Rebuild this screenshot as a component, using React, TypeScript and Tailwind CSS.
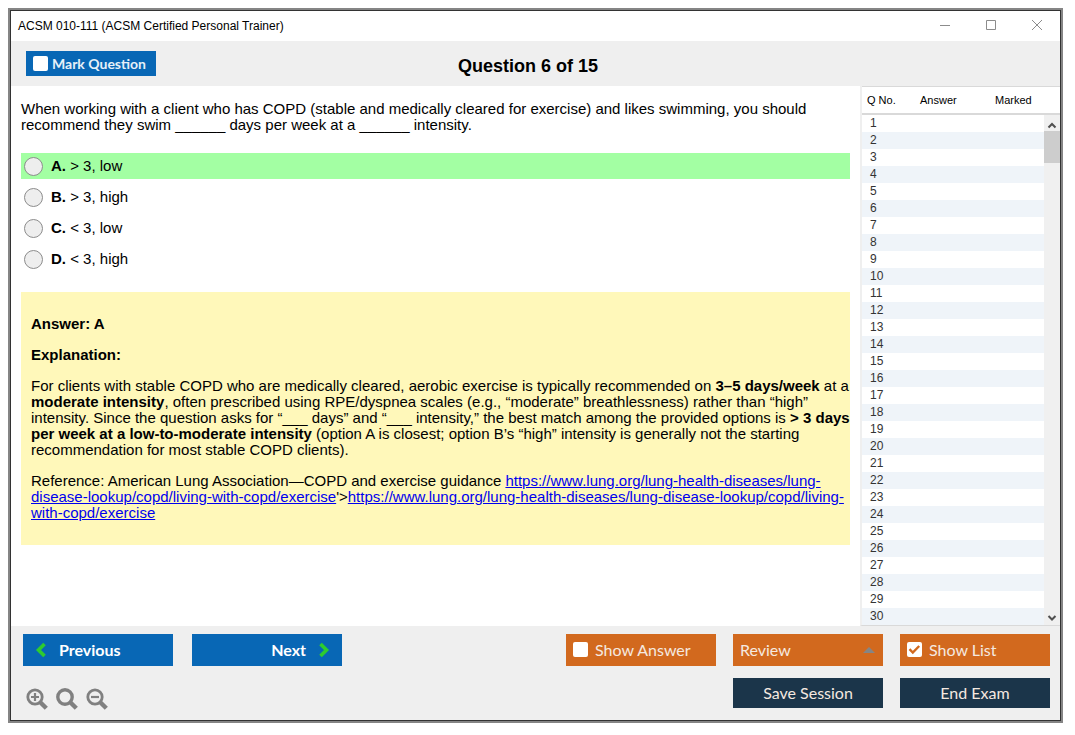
import { useState } from "react";
import type { ReactNode } from "react";

const OPTIONS = [
  { key: "A", text: "> 3, low" },
  { key: "B", text: "> 3, high" },
  { key: "C", text: "< 3, low" },
  { key: "D", text: "< 3, high" },
];

const CORRECT = "A";
const QUESTIONS = Array.from({ length: 30 }, (_, i) => i + 1);
const LUNG_URL =
  "https://www.lung.org/lung-health-diseases/lung-disease-lookup/copd/living-with-copd/exercise";

function TitleBar() {
  return (
    <div className="flex h-[30px] items-center justify-between bg-white pl-[7px] pr-[17px]">
      <span className="text-xs text-black">
        ACSM 010-111 (ACSM Certified Personal Trainer)
      </span>
      <div className="flex items-center gap-[34px]">
        <button type="button" aria-label="Minimize">
          <svg width="12" height="12" viewBox="0 0 12 12" className="block">
            <path d="M1 5.5h10" stroke="#8c8c8c" />
          </svg>
        </button>
        <button type="button" aria-label="Maximize">
          <svg width="12" height="12" viewBox="0 0 12 12" className="block">
            <path d="M1.5 0.5h9v9h-9z" fill="none" stroke="#8c8c8c" />
          </svg>
        </button>
        <button type="button" aria-label="Close">
          <svg width="12" height="12" viewBox="0 0 12 12" className="block">
            <path d="M1 0l10 10M11 0L1 10" stroke="#8c8c8c" />
          </svg>
        </button>
      </div>
    </div>
  );
}

interface TickProps {
  checked: boolean;
  onChange: (v: boolean) => void;
  className: string;
  children: ReactNode;
}

function TickButton({ checked, onChange, className, children }: TickProps) {
  return (
    <label className={`flex items-center ${className}`}>
      <span className="relative flex">
        <input
          type="checkbox"
          checked={checked}
          onChange={(e) => onChange(e.target.checked)}
          className="size-[15px] appearance-none rounded-xs bg-white"
        />
        {checked && (
          <svg
            viewBox="0 0 15 15"
            className="pointer-events-none absolute inset-0"
            fill="none"
            stroke="#d2691e"
            strokeWidth="2.4"
          >
            <path d="M2.5 7.2l3.3 3.3 6.4-6.5" />
          </svg>
        )}
      </span>
      {children}
    </label>
  );
}

function Magnifier({ label, sign }: { label: string; sign?: string }) {
  return (
    <button type="button" aria-label={label}>
      <svg
        width="22"
        height="22"
        viewBox="0 0 22 22"
        className="block"
        fill="none"
        stroke="#808080"
      >
        <circle cx="9" cy="9" r="7.2" strokeWidth={sign ? 2.8 : 3.4} />
        <path d="M14 14l6.3 6.3" strokeWidth="4.4" />
        {sign && <path d={sign} strokeWidth="2.2" />}
      </svg>
    </button>
  );
}

function QuestionList() {
  return (
    <aside className="flex border-b border-l-2 border-b-[#d9d9d9] border-l-[#efefef] bg-white">
      <table className="w-[182px] table-fixed border-collapse text-[#333]">
        <thead>
          <tr className="h-[27px] border-t border-b-2 border-[#d9d9d9] text-[11px] text-black">
            <th className="w-[58px] pl-[5px] text-left font-normal">Q No.</th>
            <th className="text-left font-normal">Answer</th>
            <th className="w-[49px] text-left font-normal">Marked</th>
          </tr>
        </thead>
        <tbody className="text-xs leading-[17px]">
          {QUESTIONS.map((n) => (
            <tr key={n} className="h-[17px] even:bg-[#eff4f9]">
              <td className="pl-2">{n}</td>
              <td />
              <td />
            </tr>
          ))}
        </tbody>
      </table>
      <div className="flex w-4 flex-col">
        <div className="h-[29px] border-t border-b-2 border-[#d9d9d9]" />
        <div className="flex flex-1 flex-col items-center bg-[#f0f0f0] pt-1">
          <button type="button" aria-label="Scroll up" className="h-3">
            <svg width="10" height="8" viewBox="0 0 10 8" className="block">
              <path d="M1.5 6.5L5 3 8.5 6.5" fill="none" stroke="#505050" strokeWidth="2" />
            </svg>
          </button>
          <div className="h-8 w-full bg-[#cdcdcd]" />
          <button type="button" aria-label="Scroll down" className="mt-auto h-[14px]">
            <svg width="10" height="8" viewBox="0 0 10 8" className="block">
              <path d="M1.5 2L5 5.5 8.5 2" fill="none" stroke="#505050" strokeWidth="2" />
            </svg>
          </button>
        </div>
      </div>
    </aside>
  );
}

function Explanation() {
  return (
    <section className="mt-5 space-y-[15px] bg-[#fff8ba] py-6 pl-[10px]">
      <p className="font-bold">Answer: A</p>
      <p className="font-bold">Explanation:</p>
      <p>
        For clients with stable COPD who are medically cleared, aerobic exercise
        is typically recommended on <b>3–5 days/week</b> at a{" "}
        <b>moderate intensity</b>, often prescribed using RPE/dyspnea scales
        (e.g., “moderate” breathlessness) rather than “high” intensity. Since
        the question asks for “___ days” and “___ intensity,” the best match
        among the provided options is{" "}
        <b>&gt; 3 days per week at a low-to-moderate intensity</b> (option A is
        closest; option B’s “high” intensity is generally not the starting
        recommendation for most stable COPD clients).
      </p>
      <p>
        Reference: American Lung Association—COPD and exercise guidance{" "}
        <a href={LUNG_URL} className="text-[#0000ee] underline">
          {LUNG_URL}
        </a>
        '&gt;
        <a href={LUNG_URL} className="text-[#0000ee] underline">
          {LUNG_URL}
        </a>
      </p>
    </section>
  );
}

export default function App() {
  const [marked, setMarked] = useState(false);
  const [showAnswer, setShowAnswer] = useState(false);
  const [showList, setShowList] = useState(true);
  const [picked, setPicked] = useState("");

  return (
    <div className="bg-white pt-2 pr-3 pb-3 pl-2 font-['Liberation_Sans',Arial,sans-serif] text-black">
      <main className="border-2 border-[#858585]">
        <div className="border border-[#333]">
          <TitleBar />

          <header className="grid h-[45px] grid-cols-[130px_1fr_160px] items-center bg-[#efefef] pl-[15px]">
            <TickButton
              checked={marked}
              onChange={setMarked}
              className="h-[25px] gap-1 bg-[#0867b5] pl-[7px] font-['Lato',sans-serif] text-sm font-bold text-[#e6f0f8]"
            >
              Mark Question
            </TickButton>
            <h1 className="pt-1 text-center text-lg font-bold">
              Question 6 of 15
            </h1>
          </header>

          <div className="flex bg-white">
            <div className="min-w-0 flex-1 px-[10px] pt-[15px] text-[15px] leading-4">
              <p>
                When working with a client who has COPD (stable and medically
                cleared for exercise) and likes swimming, you should recommend
                they swim ______ days per week at a ______ intensity.
              </p>
              <div className="mt-5 space-y-[5px]">
                {OPTIONS.map((o) => (
                  <label
                    key={o.key}
                    className={`flex h-[26px] items-center gap-2 pl-[3px] ${
                      o.key === CORRECT ? "bg-[#a3ffa3]" : ""
                    }`}
                  >
                    <input
                      type="radio"
                      name="answer"
                      checked={picked === o.key}
                      onChange={() => setPicked(o.key)}
                      className="size-[19px] appearance-none rounded-full border border-[#8c8c8c] bg-[#eee] checked:border-4"
                    />
                    <span>
                      <b>{o.key}.</b> {o.text}
                    </span>
                  </label>
                ))}
              </div>
              <Explanation />
            </div>
            {showList && <QuestionList />}
          </div>

          <footer className="flex justify-between bg-[#efefef] pt-2 pr-[10px] pb-[10px] pl-3 font-['Lato',sans-serif] text-base text-[#f5e9e0]">
            <div className="flex flex-col gap-[22px]">
              <div className="flex gap-[19px] font-bold text-white">
                <button
                  type="button"
                  className="flex h-8 w-[150px] items-center gap-3 bg-[#0867b5] pl-3"
                >
                  <svg width="12" height="16" viewBox="0 0 12 16">
                    <path d="M9.5 2L3.5 8l6 6" fill="none" stroke="#2ecc2e" strokeWidth="3.6" />
                  </svg>
                  Previous
                </button>
                <button
                  type="button"
                  className="flex h-8 w-[150px] items-center justify-end gap-3 bg-[#0867b5] pr-3"
                >
                  Next
                  <svg width="12" height="16" viewBox="0 0 12 16">
                    <path d="M2.5 2l6 6-6 6" fill="none" stroke="#2ecc2e" strokeWidth="3.6" />
                  </svg>
                </button>
              </div>
              <div className="flex gap-2 pl-[3px]">
                <Magnifier label="Zoom in" sign="M5 9h8M9 5v8" />
                <Magnifier label="Reset zoom" />
                <Magnifier label="Zoom out" sign="M5 9h8" />
              </div>
            </div>

            <div className="grid grid-cols-[150px_150px_150px] content-start gap-x-[17px] gap-y-3">
              <TickButton
                checked={showAnswer}
                onChange={setShowAnswer}
                className="h-8 gap-[7px] bg-[#d2691e] pl-[7px]"
              >
                Show Answer
              </TickButton>
              <div className="relative">
                <select
                  aria-label="Review"
                  className="h-8 w-full appearance-none bg-[#d2691e] pl-[7px]"
                >
                  <option>Review</option>
                </select>
                <svg
                  width="12"
                  height="6"
                  viewBox="0 0 12 6"
                  className="pointer-events-none absolute top-[13px] right-2"
                >
                  <path d="M0 6l6-6 6 6z" fill="#858585" />
                </svg>
              </div>
              <TickButton
                checked={showList}
                onChange={setShowList}
                className="h-8 gap-[7px] bg-[#d2691e] pl-[7px]"
              >
                Show List
              </TickButton>
              <button type="button" className="col-start-2 h-[30px] bg-[#1b354a]">
                Save Session
              </button>
              <button type="button" className="h-[30px] bg-[#1b354a]">
                End Exam
              </button>
            </div>
          </footer>
        </div>
      </main>
    </div>
  );
}
